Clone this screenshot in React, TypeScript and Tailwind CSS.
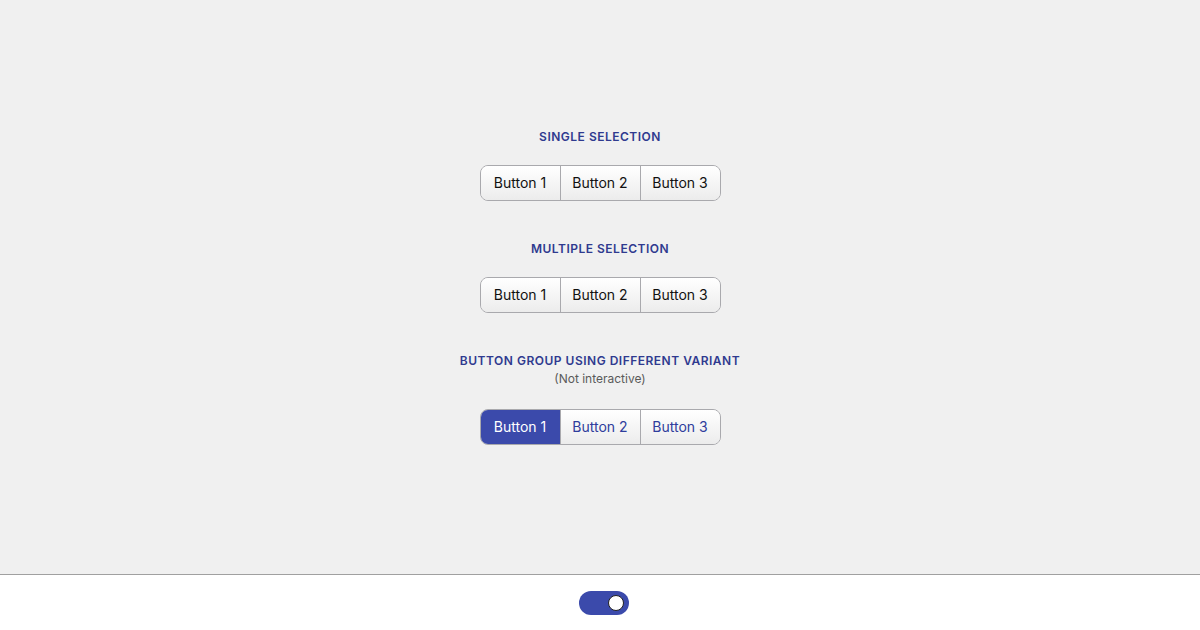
import { useState } from "react";

type Variant = "default" | "outline";

function Group({
  selected,
  onSelect,
  variant = "default",
}: {
  selected: number[];
  onSelect?: (i: number) => void;
  variant?: Variant;
}) {
  return (
    <div className="flex w-[241px] overflow-hidden rounded-lg border border-[#a9a9ad]">
      {[1, 2, 3].map((n, i) => {
        const active = selected.includes(i);
        let cls =
          "flex h-[34px] flex-1 items-center justify-center text-[14px] bg-gradient-to-b from-white to-[#ececec] text-[#111]";
        if (variant === "outline") {
          cls = active
            ? "flex h-[34px] flex-1 items-center justify-center text-[14px] bg-[#3b4aab] text-white"
            : "flex h-[34px] flex-1 items-center justify-center text-[14px] bg-gradient-to-b from-white to-[#ececec] text-[#2f3d9c]";
        }
        return (
          <button
            key={n}
            onClick={() => onSelect?.(i)}
            className={`${cls} ${i > 0 ? "border-l border-[#a9a9ad]" : ""}`}
          >
            Button {n}
          </button>
        );
      })}
    </div>
  );
}

function Heading({ children }: { children: React.ReactNode }) {
  return (
    <p className="text-[12px] leading-4 font-semibold uppercase tracking-[0.5px] text-[#2f3a8f]">
      {children}
    </p>
  );
}

export default function App() {
  const [single, setSingle] = useState<number[]>([]);
  const [multi, setMulti] = useState<number[]>([]);
  const [on, setOn] = useState(true);

  return (
    <div className="flex h-[630px] flex-col bg-[#f0f0f0] font-['Inter',sans-serif]">
      <main className="flex flex-1 flex-col items-center justify-center pb-px">
        <Heading>Single selection</Heading>
        <div className="mt-[20px]">
          <Group selected={single} onSelect={() => setSingle([])} />
        </div>

        <div className="mt-[40px]">
          <Heading>Multiple selection</Heading>
        </div>
        <div className="mt-[20px]">
          <Group selected={multi} onSelect={() => setMulti([])} />
        </div>

        <div className="mt-[40px] flex flex-col items-center">
          <Heading>Button group using different variant</Heading>
          <p className="mt-0.5 text-[12px] leading-4 text-[#5a5a5a]">(Not interactive)</p>
        </div>
        <div className="mt-[22px]">
          <Group selected={[0]} variant="outline" />
        </div>
      </main>
      <footer className="flex h-[56px] items-center justify-center border-t border-[#a0a0a0] bg-white">
        <button
          onClick={() => setOn(!on)}
          className={`ml-2 flex h-6 w-[50px] items-center rounded-full px-[5px] ${on ? "justify-end bg-[#3b4aab]" : "justify-start bg-[#bbb]"}`}
        >
          <span className="h-4 w-4 rounded-full border border-[#222] bg-white" />
        </button>
      </footer>
    </div>
  );
}
